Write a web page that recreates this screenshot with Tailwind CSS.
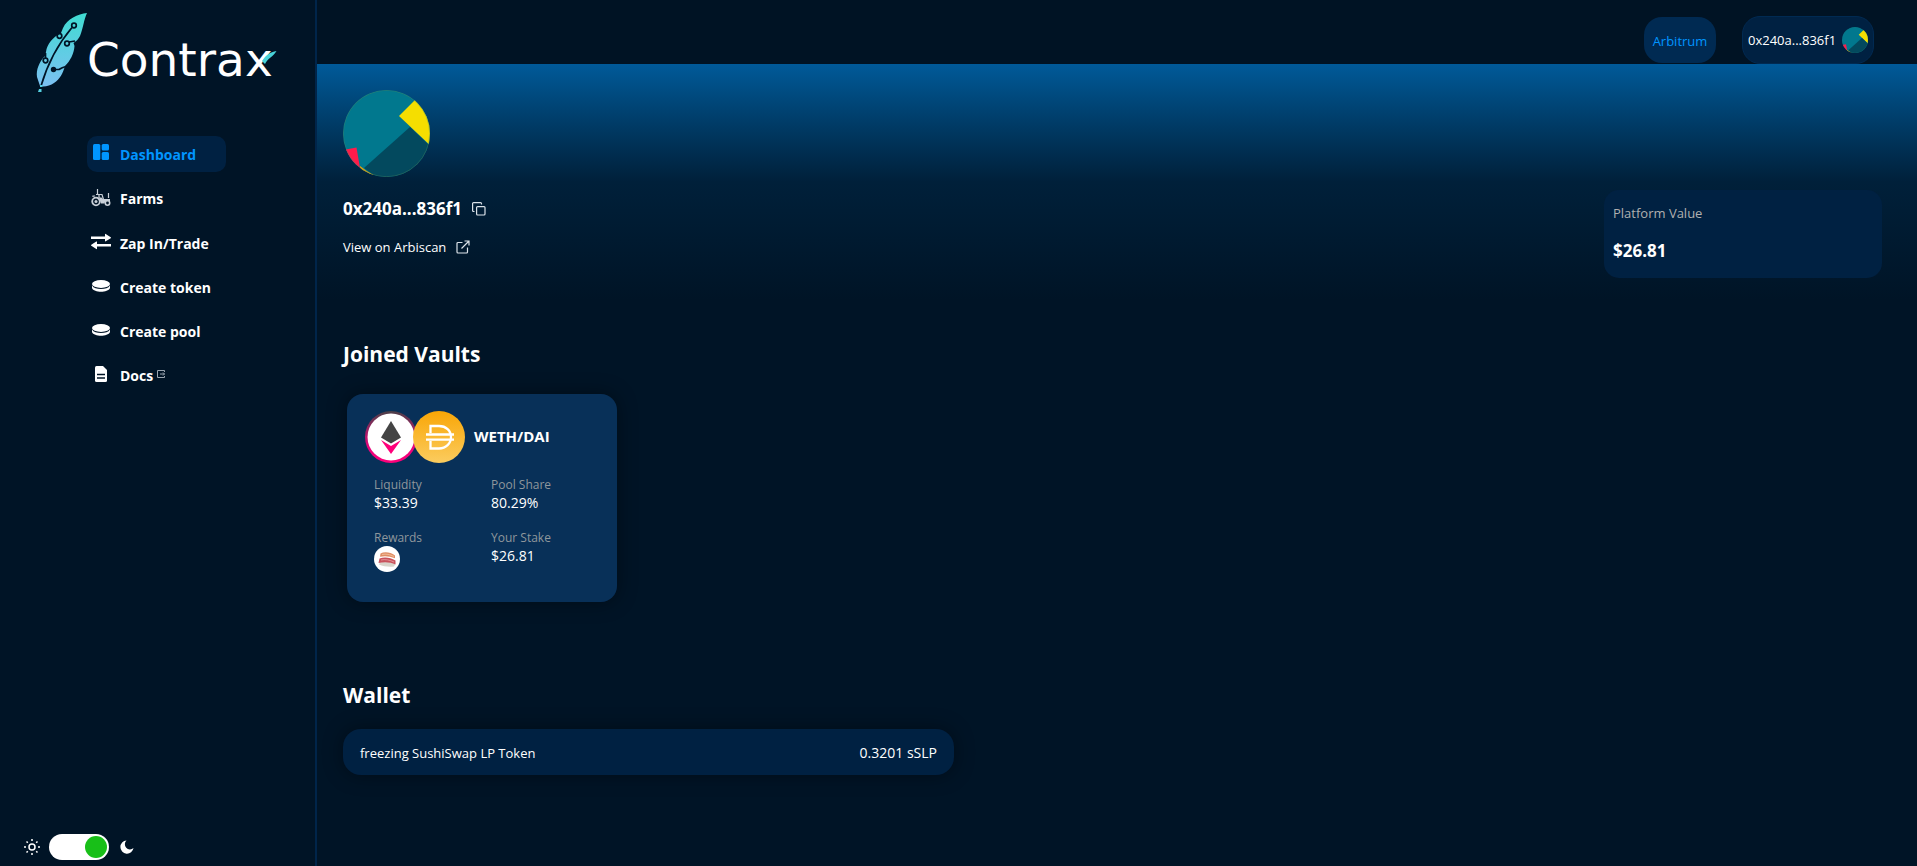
<!DOCTYPE html>
<html lang="en">
<head>
<meta charset="utf-8">
<meta name="viewport" content="width=device-width, initial-scale=1">
<title>Contrax</title>
<script src="https://cdn.jsdelivr.net/npm/@tailwindcss/browser@4"></script>
</head>
<body class="flex min-h-screen bg-[#001426] font-['Open_Sans','Noto_Sans',sans-serif] text-sm leading-5 text-white">

<!-- Shared symbols -->
<svg class="hidden" aria-hidden="true">
  <symbol id="avatar" viewBox="0 0 87 87">
    <rect width="87" height="87" fill="#01788e"/>
    <path d="M56 26L74 8l18 18v34z" fill="#f5de00"/>
    <path d="M0 60l13.500-2.500L17 78 0 80z" fill="#ff1b4b"/>
    <path d="M17 76q7 6 14 9v4H17z" fill="#f2a202"/>
    <path d="M67 37L21 78l12 9h54V56z" fill="#03495e"/>
    <circle cx="43.500" cy="43.500" r="43.200" fill="none" stroke="#5d8a50" stroke-opacity=".6" stroke-width=".6"/>
  </symbol>
  <symbol id="coin" viewBox="0 0 18 12">
    <ellipse cx="9" cy="4" rx="9" ry="3.900"/>
    <path d="M0 5.500C1.500 8.200 5 9 9 9s7.500-.8 9-3.500V8c-1 2.600-5 3.700-9 3.700S1 10.600 0 8z"/>
  </symbol>
</svg>

<aside class="flex w-[317px] shrink-0 flex-col border-r-2 border-[#00254a]">
  <a href="#" aria-label="Contrax" class="flex h-[136px] items-start pl-[36px] pt-3">
    <svg class="h-[82px] w-[52px] shrink-0" viewBox="0 0 52 82" aria-hidden="true">
      <defs><linearGradient id="feather" x1="0" y1="0" x2="0" y2="1"><stop offset="0" stop-color="#3fdcd2"/><stop offset="1" stop-color="#7cc0f2"/></linearGradient></defs>
      <path d="M51 1C42 2 31 7 27 16l-2 5C17 25 11 32 10 40l-1 4C3 50 0 58 1 65l3 9c4 1 10 0 14-3 6-4 9-10 11-17 5-5 9-12 9.500-20l-1-3c3-2 5-4 6.500-7C47 17 48 7 51 1z" fill="url(#feather)"/>
      <g fill="none" stroke="#001426" stroke-width="1.700">
        <path d="M36 15.500C22 32 12 50 5 74"/>
        <circle cx="38" cy="13.500" r="2.300"/><path d="M24 22v-5"/><circle cx="23.500" cy="24" r="2.300"/>
        <path d="M33 30l6-1"/><circle cx="31" cy="31.500" r="2.300"/>
        <path d="M9.500 46v-5"/><circle cx="9.500" cy="48.500" r="2.300"/>
        <path d="M19 57.500h4q3-2 7-3"/>
      </g>
      <circle cx="17.500" cy="57.500" r="2.700" fill="#001426"/>
      <path d="M4 73h2.500v2H4zM3 77h2.500v3H2z" fill="#55cfe0"/>
    </svg>
    <span class="relative mt-[22px] -ml-px font-['DejaVu_Sans',sans-serif] text-[47px] leading-[52px]">Contrax<svg class="absolute -right-1 top-[17px] h-[13px] w-[15px]" viewBox="0 0 15 13" aria-hidden="true"><path d="M14.500 0C8 1 4 4 0 10l3 3C6 7 11 6 14.500 0z" fill="#48d2d8"/></svg></span>
  </a>

  <nav class="flex w-[139px] flex-col gap-2 self-start ml-[87px] font-bold leading-5">
    <a href="#" class="flex h-9 items-center gap-2 rounded-[10px] bg-[#002142] pl-1 text-[#0095ff]">
      <svg class="mb-1 size-5" viewBox="0 0 20 20" fill="currentColor" aria-hidden="true"><rect x="2" y="2" width="7.300" height="16" rx="1.500"/><rect x="10.700" y="2" width="7.300" height="6.500" rx="1.500"/><rect x="10.700" y="10" width="7.300" height="8" rx="1.500"/></svg>
      <span class="pt-[2px] pl-px">Dashboard</span>
    </a>
    <a href="#" class="flex h-9 items-center gap-2 pl-1">
      <svg class="mb-px size-5" viewBox="0 0 20 20" fill="none" stroke="#c8d0d8" aria-hidden="true">
        <circle cx="5" cy="13.500" r="3.800" stroke-width="1.800"/><circle cx="5" cy="13.500" r="1.500" fill="#c8d0d8" stroke="none"/><circle cx="16.500" cy="15" r="2.200" stroke-width="1.600"/>
        <path d="M2 9V8h2M6.500 1v6M5 6.500h6l1.500 5M8 7v3.500M17.500 5v5" stroke-width="1.200"/>
        <path d="M8 9.500h2.500L12 11h7v2.500c-2.500-1.500-5-.5-5.500 2H10z" fill="#c8d0d8" stroke="none"/>
      </svg>
      <span class="pt-[2px] pl-px">Farms</span>
    </a>
    <a href="#" class="flex h-9 items-center gap-2 pl-1 whitespace-nowrap">
      <svg class="mb-px size-5" viewBox="0 0 20 20" fill="currentColor" aria-hidden="true"><path d="M0 4.500h14V2.200q0-.7.700-.2l5 3.200q.6.600 0 1.100l-5 3q-.7.400-.7-.3V7H0zM20 12H6V9.800q0-.7-.7-.2l-5 3.200q-.6.500 0 1l5 3.200q.7.400.7-.3v-2.200h14z"/></svg>
      <span class="pt-1 pl-px">Zap In/Trade</span>
    </a>
    <a href="#" class="flex h-9 items-center gap-2 pl-1 whitespace-nowrap">
      <svg class="mb-px h-3 w-5" fill="currentColor" aria-hidden="true"><use href="#coin"/></svg>
      <span class="pt-1 pl-px">Create token</span>
    </a>
    <a href="#" class="flex h-9 items-center gap-2 pl-1 whitespace-nowrap">
      <svg class="mb-px h-3 w-5" fill="currentColor" aria-hidden="true"><use href="#coin"/></svg>
      <span class="pt-1 pl-px">Create pool</span>
    </a>
    <a href="#" class="flex h-9 items-center gap-2 pl-1">
      <svg class="mb-px size-5" viewBox="0 0 20 20" aria-hidden="true"><path d="M5.500 2H12l4 4v10.500q0 1.500-1.500 1.500h-9Q4 18 4 16.500v-13Q4 2 5.500 2z" fill="#fff"/><path d="M6 10.500h8M6 14h8" stroke="#001426" stroke-width="1.500"/></svg>
      <span class="flex items-start pt-1 pl-px">Docs
        <svg class="ml-1 mt-1 size-2" viewBox="0 0 8 8" fill="none" stroke="#9aa5b0" aria-hidden="true"><path d="M7.500 2V.5h-7v7h7V6M3 4h4.500M6 2.500L7.500 4 6 5.500"/></svg>
      </span>
    </a>
  </nav>

  <div class="mt-auto flex items-center gap-2 pb-[6px] pl-6">
    <svg class="size-4" viewBox="0 0 16 16" fill="none" stroke="#fff" stroke-width="1.500" aria-hidden="true"><circle cx="8" cy="8" r="3"/><path d="M8 0v2M8 14v2M0 8h2M14 8h2M2.500 2.500l1.300 1.300M12.200 12.200l1.300 1.300M2.500 13.500l1.300-1.300M12.200 3.800l1.300-1.300"/></svg>
    <input type="checkbox" checked role="switch" aria-label="Dark mode" class="ml-px h-[26px] w-[60px] appearance-none rounded-full bg-white p-[2px] before:ml-auto before:mr-0 before:block before:size-[22px] before:rounded-full before:bg-[#18bf18]">
    <svg class="ml-[2px] size-4" viewBox="0 0 16 16" fill="#fff" aria-hidden="true"><path d="M7.500 1.500a6.600 6.600 0 1 0 7 7.600A4.600 4.600 0 0 1 7.500 1.500z"/></svg>
  </div>
</aside>

<div class="flex min-w-0 flex-1 flex-col">
  <header class="flex h-16 items-center justify-end gap-[26px] bg-[#001324] pr-[43px]">
    <button type="button" class="mt-4 h-[46px] w-[72px] rounded-[18px] bg-[#002a52] pt-[2px] text-[13px] text-[#0095ff]">Arbitrum</button>
    <button type="button" class="mt-4 flex h-12 w-[132px] items-center justify-between rounded-[18px] border border-[#002a52] bg-[#002142] px-[5px] text-[13px]">
      <span>0x240a...836f1</span>
      <svg class="size-[26px] shrink-0 rounded-full" aria-hidden="true"><use href="#avatar"/></svg>
    </button>
  </header>

  <main>
    <section class="flex h-[236px] items-end justify-between bg-linear-to-b from-[#005a99] via-[#00203a] via-50% to-[#001426] pl-[26px] pr-[35px] pb-[22px]">
      <div class="self-start pt-[26px]">
        <svg class="size-[87px] rounded-full" role="img" aria-label="Account avatar"><use href="#avatar"/></svg>
        <div class="mt-5 flex items-center gap-[10px]">
          <h1 class="text-[17px] leading-6 font-bold">0x240a...836f1</h1>
          <button type="button" aria-label="Copy address"><svg class="size-[14px]" viewBox="0 0 14 14" fill="none" stroke="#dbe3ea" stroke-width="1.200"><rect x="4.600" y="4.600" width="8.400" height="8.400" rx="1"/><path d="M2.500 9.500H1.600a1 1 0 0 1-1-1V1.600a1 1 0 0 1 1-1h6.900a1 1 0 0 1 1 1v.9"/></svg></button>
        </div>
        <a href="#" class="mt-4 flex items-center gap-[10px] text-[13px]">View on Arbiscan
          <svg class="size-[14px]" viewBox="0 0 14 14" fill="none" stroke="#dbe3ea" stroke-width="1.200" aria-hidden="true"><path d="M6.500 2.500H2a1 1 0 0 0-1 1V12a1 1 0 0 0 1 1h8.500a1 1 0 0 0 1-1V7.500M8.500 1H13v4.500M13 1L5.500 8.500"/></svg>
        </a>
      </div>
      <div class="h-[88px] w-[278px] rounded-[15px] bg-[#002142] px-[9px] pt-[13px]">
        <h2 class="text-[13px] text-[#b0b0b0]">Platform Value</h2>
        <p class="mt-4 text-[17px] leading-6 font-bold">$26.81</p>
      </div>
    </section>

    <section class="px-[26px] pt-[38px]">
      <h2 class="text-[21px] leading-8 font-bold">Joined Vaults</h2>
      <article class="ml-1 mt-6 h-[208px] w-[270px] rounded-2xl bg-[#083058] px-[18px] pt-[17px] shadow-[0_0_20px_rgba(0,0,0,0.4)]">
        <div class="flex items-center">
          <svg class="size-[52px]" viewBox="0 0 52 52" role="img" aria-label="WETH">
            <defs><linearGradient id="wethRing" x1="0" y1="0" x2="0" y2="1"><stop offset="0" stop-color="#4a4048"/><stop offset=".7" stop-color="#e8047c"/><stop offset="1" stop-color="#ff007a"/></linearGradient></defs>
            <circle cx="26" cy="26" r="26" fill="url(#wethRing)"/><circle cx="26" cy="26" r="23.500" fill="#fff"/>
            <path d="M26 10l10 16.500L26 32.500l-10-6z" fill="#444"/><path d="M16 29l10 6 10-6-10 14z" fill="#ff007a"/>
          </svg>
          <svg class="-ml-1 size-[52px]" viewBox="0 0 52 52" role="img" aria-label="DAI">
            <defs><linearGradient id="daiFill" x1="0" y1="0" x2="0" y2="1"><stop offset="0" stop-color="#f9a606"/><stop offset="1" stop-color="#fbcc5f"/></linearGradient></defs>
            <circle cx="26" cy="26" r="26" fill="url(#daiFill)"/>
            <path d="M17.500 22V15H26c7 0 12 4.500 12 11s-5 11.500-12 11.500h-8.500V30M13 23.500h28M13 28.700h28" fill="none" stroke="#fff" stroke-width="2.300"/>
          </svg>
          <h3 class="ml-[9px] pb-[2px] text-[15px] font-bold">WETH/DAI</h3>
        </div>
        <dl class="ml-[9px] mt-[13px] grid grid-cols-[117px_1fr] gap-y-[17px] leading-[18px]">
          <div><dt class="text-xs leading-[18px] text-[#8f979c]">Liquidity</dt><dd>$33.39</dd></div>
          <div><dt class="text-xs leading-[18px] text-[#8f979c]">Pool Share</dt><dd>80.29%</dd></div>
          <div><dt class="text-xs leading-[18px] text-[#8f979c]">Rewards</dt><dd class="-mt-px">
            <svg class="size-[26px]" viewBox="0 0 26 26" role="img" aria-label="SushiSwap"><circle cx="13" cy="13" r="13" fill="#fff"/><path d="M6 16.500c5-1.500 10-1 15.500 1L20 20.500c-5 .5-11 0-15-2z" fill="#d9d5cb"/><path d="M6.500 7.500c4-2 10-1.500 14.500 2v2.800c-5-2-10-2.500-15-1.500z" fill="#e08f66"/><path d="M5.500 12.500c5-2 11-1 16 2v4c-5-2.500-11-3-17-1.500z" fill="#c9525c"/><path d="M8 8.500c4-1 8 0 12 2" stroke="#f3c6a4" stroke-width=".8" fill="none"/><path d="M7 14c4-1 9 0 13 2" stroke="#e9a3a3" stroke-width=".8" fill="none"/></svg>
          </dd></div>
          <div><dt class="text-xs leading-[18px] text-[#8f979c]">Your Stake</dt><dd>$26.81</dd></div>
        </dl>
      </article>
    </section>

    <section class="px-[26px] pt-[77px]">
      <h2 class="text-[21px] leading-8 font-bold">Wallet</h2>
      <div class="mt-[18px] flex h-[46px] w-[611px] max-w-full items-center justify-between rounded-[18px] bg-[#002142] px-[17px] shadow-[0_0_20px_rgba(0,0,0,0.4)]">
        <h3 class="pt-[2px] text-[13px] font-medium">freezing SushiSwap LP Token</h3>
        <p class="pt-[2px]">0.3201 sSLP</p>
      </div>
    </section>
  </main>
</div>
</body>
</html>
